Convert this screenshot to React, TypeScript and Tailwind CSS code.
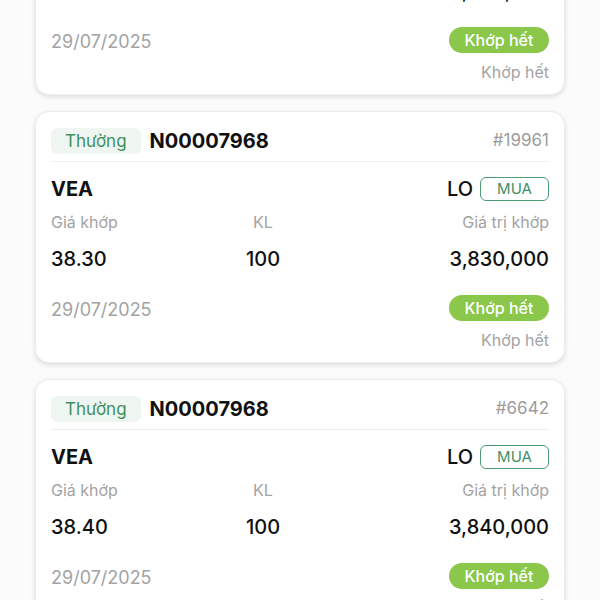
import React from 'react';

interface Order {
  id: string;
  price: string;
  qty: string;
  value: string;
}

const orders: Order[] = [
  { id: '#19958', price: '38.30', qty: '100', value: '3,830,000' },
  { id: '#19961', price: '38.30', qty: '100', value: '3,830,000' },
  { id: '#6642', price: '38.40', qty: '100', value: '3,840,000' },
];

const OrderCard: React.FC<{ order: Order }> = ({ order }) => (
  <div className="w-[530px] h-[252px] bg-white rounded-[14px] border border-[#ececec] shadow-[0_2px_5px_rgba(0,0,0,0.12)] px-[15px] pt-4 pb-3 flex flex-col">
    <div className="flex items-center justify-between pb-[7px] border-b border-[#ededed]">
      <div className="flex items-center">
        <span className="h-[26px] px-[14px] rounded-[6px] bg-[#eff6f1] text-[#3f8f5f] text-[17px] leading-[26px]">Thường</span>
        <span className="ml-[9px] text-[20px] font-bold text-[#111] leading-[26px]">N00007968</span>
      </div>
      <span className="text-[17px] text-[#9c9c9c]">{order.id}</span>
    </div>

    <div className="mt-[15px] flex items-center justify-between h-[24px]">
      <span className="text-[20px] font-bold text-[#111]">VEA</span>
      <div className="flex items-center">
        <span className="text-[20px] font-medium text-[#111]">LO</span>
        <span className="ml-[7px] h-[24px] w-[69px] rounded-[6px] border-[1.5px] border-[#4c9c75] text-[#3f9168] text-[15px] leading-[21px] text-center">MUA</span>
      </div>
    </div>

    <div className="mt-[11px] grid grid-cols-[176px_72px_1fr] text-[16px] leading-[20px] text-[#a3a3a3]">
      <span>Giá khớp</span>
      <span className="text-center">KL</span>
      <span className="text-right">Giá trị khớp</span>
    </div>

    <div className="mt-[13px] grid grid-cols-[176px_72px_1fr] text-[20px] leading-[28px] font-medium text-[#111]">
      <span>{order.price}</span>
      <span className="text-center">{order.qty}</span>
      <span className="text-right">{order.value}</span>
    </div>

    <div className="mt-[20px] flex items-center justify-between">
      <span className="text-[18px] text-[#a3a3a3] pt-[3px]">29/07/2025</span>
      <span className="h-[26px] w-[100px] rounded-full bg-[#8ac74b] text-white text-[16px] leading-[26px] text-center font-medium">Khớp hết</span>
    </div>

    <div className="mt-[6px] text-right text-[16px] leading-[22px] text-[#a3a3a3]">Khớp hết</div>
  </div>
);

export default function App() {
  return (
    <div className="w-[600px] h-[600px] overflow-hidden bg-[#fbfbfb]" style={{ fontFamily: 'Inter, "Noto Sans", sans-serif' }}>
      <div className="-mt-[157px] pl-[35px] flex flex-col gap-[16px]">
        {orders.map((o, i) => (
          <OrderCard key={i} order={o} />
        ))}
      </div>
    </div>
  );
}
